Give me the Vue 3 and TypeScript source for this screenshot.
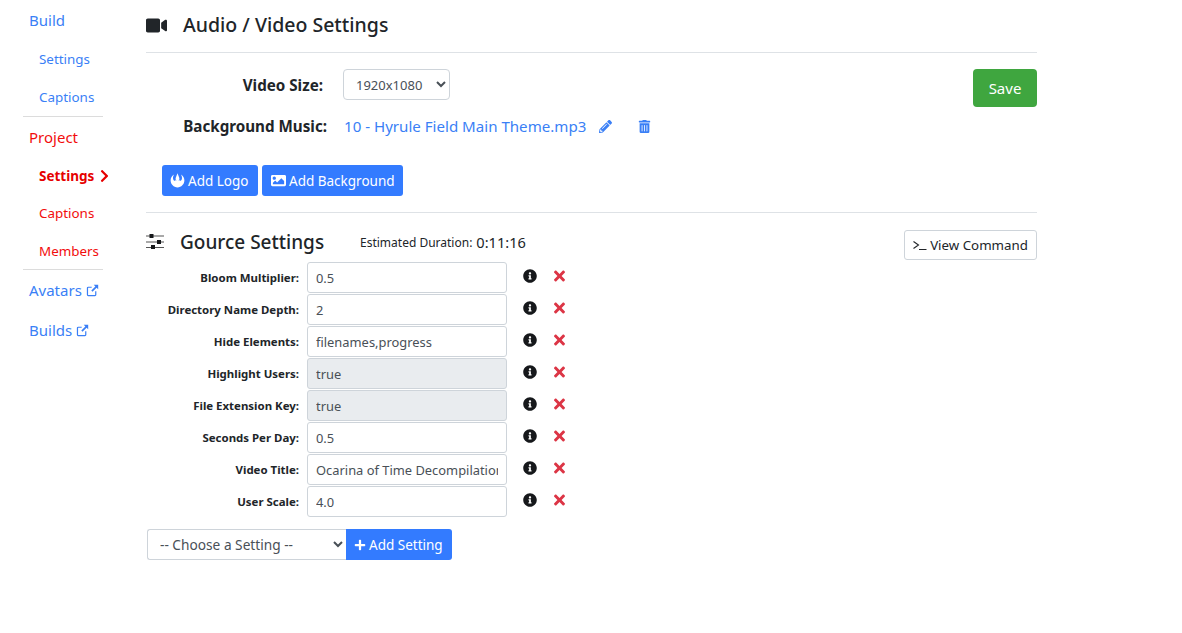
<script setup lang="ts">
interface Setting { label: string; value: string; disabled?: boolean }
const settings: Setting[] = [
  { label: 'Bloom Multiplier:', value: '0.5' },
  { label: 'Directory Name Depth:', value: '2' },
  { label: 'Hide Elements:', value: 'filenames,progress' },
  { label: 'Highlight Users:', value: 'true', disabled: true },
  { label: 'File Extension Key:', value: 'true', disabled: true },
  { label: 'Seconds Per Day:', value: '0.5' },
  { label: 'Video Title:', value: 'Ocarina of Time Decompilation' },
  { label: 'User Scale:', value: '4.0' },
]
const info = 'M256 8C119.043 8 8 119.083 8 256c0 136.997 111.043 248 248 248s248-111.003 248-248C504 119.083 392.957 8 256 8zm0 110c23.196 0 42 18.804 42 42s-18.804 42-42 42-42-18.804-42-42 18.804-42 42-42zm56 254c0 6.627-5.373 12-12 12h-88c-6.627 0-12-5.373-12-12v-24c0-6.627 5.373-12 12-12h12v-64h-12c-6.627 0-12-5.373-12-12v-24c0-6.627 5.373-12 12-12h64c6.627 0 12 5.373 12 12v100h12c6.627 0 12 5.373 12 12v24z'
const times = 'M242.72 256l100.07-100.07c12.28-12.28 12.28-32.19 0-44.48l-22.24-22.24c-12.28-12.28-32.19-12.28-44.48 0L176 189.28 75.93 89.21c-12.28-12.28-32.19-12.28-44.48 0L9.21 111.45c-12.28 12.28-12.28 32.19 0 44.48L109.28 256 9.21 356.07c-12.28 12.28-12.28 32.19 0 44.48l22.24 22.24c12.28 12.28 32.2 12.28 44.48 0L176 322.72l100.07 100.07c12.28 12.28 32.2 12.28 44.48 0l22.24-22.24c12.28-12.28 12.28-32.19 0-44.48L242.72 256z'
</script>

<template>
  <div class="page">
    <nav class="side">
      <a class="top blue first">Build</a>
      <a class="sub blue">Settings</a>
      <a class="sub blue">Captions</a>
      <div class="rule"></div>
      <a class="top red">Project</a>
      <a class="sub red active">Settings
        <svg class="chev" viewBox="0 0 320 512"><path fill="currentColor" d="M285.476 272.971L91.132 467.314c-9.373 9.373-24.569 9.373-33.941 0l-22.667-22.667c-9.357-9.357-9.375-24.522-.04-33.901L188.505 256 34.484 101.255c-9.335-9.379-9.317-24.544.04-33.901l22.667-22.667c9.373-9.373 24.569-9.373 33.941 0L285.475 239.03c9.373 9.372 9.373 24.568.001 33.941z"/></svg>
      </a>
      <a class="sub red">Captions</a>
      <a class="sub red">Members</a>
      <div class="rule"></div>
      <a class="top blue">Avatars
        <svg class="ext" viewBox="0 0 16 16"><path fill="none" stroke="currentColor" stroke-width="1.5" d="M12 9v4.2a1 1 0 0 1-1 1H2.8a1 1 0 0 1-1-1V5a1 1 0 0 1 1-1H7"/><path fill="currentColor" d="M9.5 1H15v5.5l-2-2-5 5-1.500-1.500 5-5z"/></svg>
      </a>
      <a class="top blue">Builds
        <svg class="ext" viewBox="0 0 16 16"><path fill="none" stroke="currentColor" stroke-width="1.5" d="M12 9v4.2a1 1 0 0 1-1 1H2.8a1 1 0 0 1-1-1V5a1 1 0 0 1 1-1H7"/><path fill="currentColor" d="M9.500 1H15v5.500l-2-2-5 5-1.500-1.500 5-5z"/></svg>
      </a>
    </nav>

    <main class="main">
      <header class="head">
        <svg class="video" viewBox="0 0 576 512"><path fill="currentColor" d="M336.2 64H47.8C21.4 64 0 85.4 0 111.8v288.4C0 426.6 21.4 448 47.8 448h288.4c26.4 0 47.8-21.4 47.8-47.8V111.800c0-26.400-21.400-47.800-47.800-47.800zm189.400 37.700L416 177.300v157.400l109.600 75.500c21.200 14.600 50.400-.3 50.400-25.800V127.500c0-25.400-29.100-40.400-50.400-25.800z"/></svg>
        <h2>Audio / Video Settings</h2>
      </header>

      <section class="av">
        <div class="av-fields">
          <div class="av-row size">
            <label>Video Size:</label>
            <select class="size-select"><option>1920x1080</option></select>
          </div>
          <div class="av-row music">
            <label>Background Music:</label>
            <a class="file">10 - Hyrule Field Main Theme.mp3</a>
            <svg class="pencil" viewBox="0 0 512 512"><path fill="currentColor" d="M497.9 142.1l-46.1 46.1c-4.7 4.7-12.3 4.7-17 0l-111-111c-4.7-4.7-4.7-12.3 0-17l46.1-46.1c18.7-18.7 49.1-18.7 67.9 0l60.1 60.1c18.8 18.7 18.8 49.1 0 67.9zM284.2 99.8L21.6 362.4.4 483.9c-2.9 16.4 11.4 30.6 27.8 27.8l121.5-21.3 262.6-262.6c4.7-4.7 4.7-12.3 0-17l-111-111c-4.8-4.7-12.4-4.7-17.1 0zM124.1 339.9c-5.5-5.5-5.5-14.3 0-19.8l154-154c5.500-5.500 14.300-5.500 19.800 0s5.500 14.300 0 19.800l-154 154c-5.500 5.500-14.300 5.500-19.800 0zM88 424h48v36.300l-64.500 11.300-31.100-31.100L51.700 376H88v48z"/></svg>
            <svg class="trash" viewBox="0 0 448 512"><path fill="currentColor" d="M32 464a48 48 0 0 0 48 48h288a48 48 0 0 0 48-48V128H32zm272-256a16 16 0 0 1 32 0v224a16 16 0 0 1-32 0zm-96 0a16 16 0 0 1 32 0v224a16 16 0 0 1-32 0zm-96 0a16 16 0 0 1 32 0v224a16 16 0 0 1-32 0zM432 32H312l-9.400-18.700A24 24 0 0 0 281.100 0H166.800a23.720 23.720 0 0 0-21.400 13.300L136 32H16A16 16 0 0 0 0 48v32a16 16 0 0 0 16 16h416a16 16 0 0 0 16-16V48a16 16 0 0 0-16-16z"/></svg>
          </div>
        </div>
        <button class="save">Save</button>
      </section>

      <div class="media-btns">
        <button class="btn logo-btn">
          <svg class="ico" viewBox="0 0 24 24"><path fill="currentColor" d="M6.500 2.500C2.500 5 1 8.500 1 12c0 6 5 11 11 11s11-5 11-11c0-3.500-1.500-7-5.500-9.500 1.200 2 2 4 1.600 6.500-.3 1.800-1.400 3.500-3.100 3.500l-1-.2.8-1.800-1.800 1.200-.9.500V12c1.700-1 2.300-2.700 1.700-4.500L12 .5 9.200 7.500c-.6 1.800 0 3.500 1.700 4.500v.2l-.9-.5-1.800-1.200.8 1.800-1 .2c-1.700 0-2.800-1.700-3.100-3.500-.4-2.500.4-4.500 1.600-6.500z"/></svg>
          Add Logo
        </button>
        <button class="btn bg-btn">
          <svg class="ico" viewBox="0 0 512 512"><path fill="currentColor" d="M464 448H48c-26.510 0-48-21.490-48-48V112c0-26.510 21.490-48 48-48h416c26.510 0 48 21.490 48 48v288c0 26.510-21.490 48-48 48zM112 120c-30.928 0-56 25.072-56 56s25.072 56 56 56 56-25.072 56-56-25.072-56-56-56zM64 384h384V272l-87.515-87.515c-4.686-4.686-12.284-4.686-16.971 0L208 320l-55.515-55.515c-4.686-4.686-12.284-4.686-16.971 0L64 336v48z"/></svg>
          Add Background
        </button>
      </div>

      <div class="divider"></div>

      <header class="gource-head">
        <div class="gource-title">
          <svg class="sliders" viewBox="0 0 18 16"><path fill="#555" d="M0 1.500h18v1H0zM0 7.500h18v1H0zM0 13h18v1H0z"/><path fill="#16181b" d="M3.500 0h4v4h-4zM11 6h4v4h-4zM5 11h4v4H5z"/></svg>
          <h3>Gource Settings</h3>
          <span class="est">Estimated Duration:</span>
          <span class="time">0:11:16</span>
        </div>
        <button class="view">
          <svg class="term" viewBox="0 0 14 10"><path fill="none" stroke="currentColor" stroke-width="1.100" d="M.5 1.500 5.500 5 .5 8.500"/><path fill="currentColor" d="M6 9h7.500v1H6z"/></svg>
          View Command
        </button>
      </header>

      <div class="rows">
        <div v-for="s in settings" :key="s.label" class="row">
          <label>{{ s.label }}</label>
          <input :value="s.value" :disabled="s.disabled" type="text" />
          <svg class="info" viewBox="0 0 512 512"><path fill="currentColor" :d="info"/></svg>
          <svg class="times" viewBox="0 0 352 512"><path fill="currentColor" :d="times"/></svg>
        </div>
      </div>

      <div class="add">
        <select class="choose"><option>-- Choose a Setting --</option></select>
        <button class="btn add-btn">
          <svg class="ico plus" viewBox="0 0 448 512"><path fill="currentColor" d="M416 208H272V64c0-17.670-14.330-32-32-32h-32c-17.670 0-32 14.330-32 32v144H32c-17.670 0-32 14.330-32 32v32c0 17.670 14.330 32 32 32h144v144c0 17.670 14.330 32 32 32h32c17.670 0 32-14.330 32-32V304h144c17.670 0 32-14.330 32-32v-32c0-17.670-14.330-32-32-32z"/></svg>
          Add Setting
        </button>
      </div>
    </main>
  </div>
</template>

<style>
body { margin: 0; background: #fff; }
</style>

<style scoped>
.page {
  display: flex;
  height: 633px;
  overflow: hidden;
  font-family: "Noto Sans", "Open Sans", sans-serif;
  color: #212529;
  font-size: 14px;
}
.side {
  width: 80px;
  margin-left: 23px;
  flex: none;
  display: flex;
  flex-direction: column;
}
.side a { display: block; white-space: nowrap; }
.blue { color: #3a7ff6; }
.red { color: #f20d0d; }
.top { font-size: 15px; line-height: 20px; padding: 10px 0 10px 6px; }
.sub { font-size: 13.400px; line-height: 18px; padding: 10px 0 10px 16px; }
.sub.red { padding-bottom: 9.250px; }
.active { font-weight: 700; color: #e60000; font-size: 13.500px; }
.rule { height: 1px; background: #dcdcdc; }
.chev { width: 9px; height: 14px; margin-left: 2px; vertical-align: -2px; }
.ext { width: 13px; height: 13px; vertical-align: -1px; }

.main { width: 891px; margin-left: 43px; flex: none; }
.head { display: flex; align-items: center; height: 50px; padding-bottom: 2px; border-bottom: 1px solid #dee2e6; }
.video { width: 21px; height: 19px; margin-right: 16px; }
h2 { margin: 0; font-size: 19.500px; font-weight: 500; line-height: 24px; }

.av { display: flex; justify-content: space-between; align-items: flex-start; padding-top: 16px; }
.av-fields { display: flex; flex-direction: column; gap: 16px; }
.av-row { display: flex; align-items: center; }
.av-row label { font-weight: 700; font-size: 15.200px; text-align: right; flex: none; white-space: nowrap; }
.size label { width: 177px; margin-right: 20px; }
.music label { width: 181px; margin-right: 17px; }
.size-select {
  width: 107px; height: 31px; padding: 0 8px; font: inherit; font-size: 13px; color: #495057;
  background: #fff; border: 1px solid #ced4da; border-radius: 4px;
}
.file { width: 242px; color: #3a7ff6; font-size: 15.100px; white-space: nowrap; }
.pencil, .trash { color: #3a7ff6; width: 13px; height: 13px; flex: none; }
.pencil { margin-left: 13px; }
.trash { margin-left: 26px; }
.save {
  width: 64px; height: 38px; background: #3fa63f; color: #fff; border: none; border-radius: 4px;
  font: inherit; font-size: 15px;
}
.media-btns { display: flex; gap: 4px; padding: 29px 0 0 16px; }
.btn {
  height: 31px; background: #337bff; color: #fff; border: none; border-radius: 3px; padding: 0 9px 0 8px;
  font: inherit; font-size: 13.500px; display: flex; align-items: center; gap: 3px; white-space: nowrap;
}
.logo-btn { width: 96px; }
.bg-btn { width: 141px; padding-left: 9px; }
.ico { width: 15px; height: 15px; flex: none; }
.plus { width: 12px; height: 12px; }
.divider { height: 1px; background: #dee2e6; margin-top: 16px; }

.gource-head { display: flex; align-items: center; padding-top: 17px; height: 30px; }
.gource-title { display: flex; align-items: center; margin-bottom: 6px; }
.sliders { width: 18px; height: 16px; margin-right: 16px; }
h3 { margin: 0; font-size: 19px; font-weight: 500; width: 180px; white-space: nowrap; }
.est { font-size: 12px; }
.time { font-size: 14.600px; margin-left: 4px; }
.view {
  margin-left: auto; width: 133px; height: 30px; background: #fff; border: 1px solid #ced4da; border-radius: 3px;
  font: inherit; font-size: 13.300px; color: #212529; display: flex; align-items: center; justify-content: center; gap: 3px;
  padding: 0;
}
.term { width: 14px; height: 10px; }

.rows { display: flex; flex-direction: column; gap: 1px; margin-top: 2px; }
.row { display: flex; align-items: center; height: 31px; }
.row label { width: 153px; margin-right: 8px; font-size: 11.450px; font-weight: 700; text-align: right; white-space: nowrap; }
.row input {
  width: 200px; height: 31px; box-sizing: border-box; padding: 0 8px; border: 1px solid #ced4da; border-radius: 3px;
  font: inherit; font-size: 12.900px; color: #495057; background: #fff;
}
.row input:disabled { background: #e9ecef; opacity: 1; }
.info { width: 14px; height: 14px; margin-left: 16px; margin-top: -3px; color: #16181b; }
.times { width: 11px; height: 16px; margin-left: 17px; margin-top: -3px; color: #dc3545; }

.add { display: flex; margin: 12px 0 0 1px; }
.choose {
  width: 199px; height: 31px; padding: 0 8px; font: inherit; font-size: 13.700px; color: #495057; background: #fff;
  border: 1px solid #ced4da; border-right: none; border-radius: 3px 0 0 3px;
}
.add-btn { border-radius: 0 3px 3px 0; width: 106px; padding: 0 0 0 8px; }
</style>
